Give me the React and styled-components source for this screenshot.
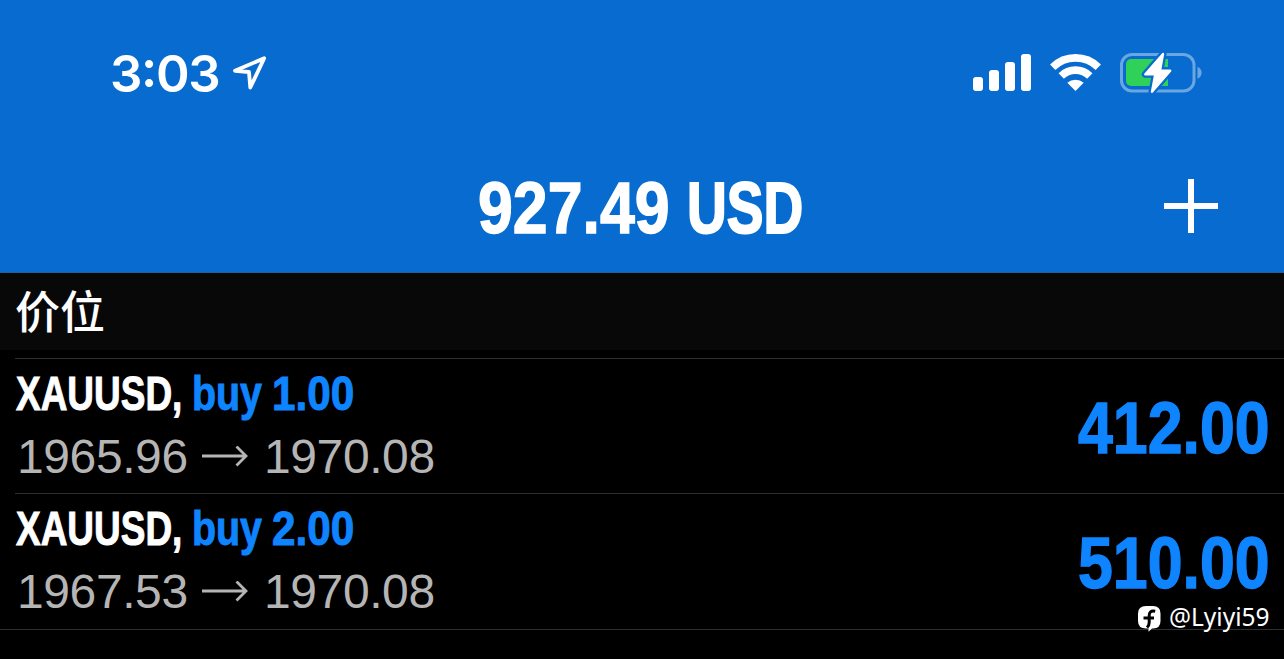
import React from "react";
import styled, { createGlobalStyle } from "styled-components";

const GlobalStyle = createGlobalStyle`
  body {
    margin: 0;
    background: #000;
    font-family: "Liberation Sans", "Noto Sans CJK SC", sans-serif;
  }
`;

const StyledScreen = styled.div`
  position: relative;
  width: 1284px;
  height: 659px;
  overflow: hidden;
  background: #000;
  color: #fff;
`;

const StyledHeader = styled.header`
  height: 273px;
  box-sizing: border-box;
  background: #076bcf;
  border-bottom: 1px solid #235f9c;
`;

const StatusBar = styled.div`
  height: 140px;
  display: flex;
  justify-content: space-between;
  box-sizing: border-box;
  padding: 43px 80px 0 110px;
`;

const StatusGroup = styled.div`
  display: flex;
  height: 60px;
  align-items: center;
  gap: ${(props) => props.$gap || 0}px;
  svg {
    display: block;
  }
`;

const Clock = styled.span`
  width: 121px;
  font-family: Inter, sans-serif;
  font-size: 51px;
  font-weight: 600;
  line-height: 61px;
  letter-spacing: -1.4px;
  span {
    display: inline-block;
    transform: translateY(-5px);
  }
`;

const TitleBar = styled.div`
  display: grid;
  grid-template-columns: 478px 1fr 120px;
  height: 132px;
  align-items: center;
`;

const Balance = styled.h1`
  grid-column: 2;
  display: flex;
  margin: 0;
  height: 132px;
  font-size: 72px;
  line-height: 136px;
`;

const AddButton = styled.button`
  width: 54px;
  height: 54px;
  padding: 0;
  border: none;
  background: none;
  color: #fff;
  svg {
    display: block;
  }
`;

const Condensed = styled.span`
  display: block;
  flex: none;
  width: ${(props) => props.$width}px;
  font-weight: 700;
  white-space: pre;
  -webkit-text-stroke: ${(props) => props.$stroke || 1}px currentColor;
  transform: scaleX(${(props) => props.$scale || 1});
  transform-origin: left;
`;

const SectionTitle = styled.h2`
  height: 77px;
  margin: 0 0 8px;
  padding-left: 15px;
  background: #080808;
  font-family: "Noto Sans CJK SC", sans-serif;
  font-size: 45px;
  font-weight: 500;
  line-height: 73px;
`;

const PositionRow = styled.div`
  display: flex;
  justify-content: space-between;
  box-sizing: border-box;
  height: ${(props) => props.$height}px;
  margin-left: 15px;
  border-top: 1px solid #2e2e2e;
`;

const Symbol = styled.div`
  display: flex;
  height: 68px;
  padding-left: 1px;
  font-size: 48px;
  line-height: 70px;
`;

const Side = styled.div`
  color: #0f84ff;
  display: flex;
`;

const Prices = styled.div`
  display: flex;
  align-items: center;
  height: 60px;
  padding-left: 2px;
  color: #b5b5b5;
  font-size: 48px;
  line-height: 60px;
  letter-spacing: -0.4px;
  svg {
    margin: 0 16px 0 14px;
  }
`;

const Price = styled.span`
  width: 171px;
`;

const Profit = styled.div`
  color: #0f84ff;
  width: 206px;
  font-size: 72px;
  line-height: 139px;
`;

const Footer = styled.div`
  border-top: 1px solid #2e2e2e;
`;

const Watermark = styled.div`
  position: absolute;
  left: 1138px;
  top: 602px;
  display: flex;
  gap: 8px;
  font-family: "Noto Sans", sans-serif;
  font-size: 24.5px;
  line-height: 29px;
  white-space: nowrap;
  svg {
    margin-top: 4px;
  }
`;

const LocationArrow = () => (
  <svg width="36" height="38" viewBox="0 0 36 38" fill="none">
    <path
      d="M33.2 4.2 4 16.8 18 18 19.3 33.5Z"
      stroke="#fff"
      strokeWidth="3.8"
      strokeLinejoin="round"
    />
  </svg>
);

const SignalIcon = () => (
  <svg width="58" height="38" viewBox="0 0 58 38" fill="#fff">
    <rect x="0" y="23" width="10" height="14" rx="3" />
    <rect x="16" y="16" width="10" height="21" rx="3" />
    <rect x="32" y="8" width="10" height="29" rx="3" />
    <rect x="48" y="0" width="10" height="37" rx="3" />
  </svg>
);

const WifiIcon = () => (
  <svg width="52" height="38" viewBox="0 0 52 38" fill="none">
    <path d="M2.7 13.2a32.5 32.5 0 0 1 45.6 0" stroke="#fff" strokeWidth="7.6" />
    <path d="M11.2 22a20.4 20.4 0 0 1 28.6 0" stroke="#fff" strokeWidth="7.6" />
    <path d="M17.3 28.7a12.5 12.5 0 0 1 16.4 0L25.5 37Z" fill="#fff" />
  </svg>
);

const BatteryIcon = () => (
  <svg width="84" height="44" viewBox="0 0 84 44" fill="none">
    <rect x="1.5" y="3.5" width="72.5" height="36.5" rx="10.5" stroke="#6ba6e2" strokeWidth="3" />
    <path d="M77.5 15.7c5.5 2 5.5 10 0 12Z" fill="#6ba6e2" />
    <path d="M11 8h37v27H11a5 5 0 0 1-5-5v-17a5 5 0 0 1 5-5Z" fill="#30d158" />
    <path
      d="M43 3 25.3 23.3h10L32 40.8 50.2 19.6H40Z"
      fill="#fff"
      stroke="#076bcf"
      strokeWidth="7"
      strokeLinejoin="round"
    />
    <path
      d="M43 3 25.3 23.3h10L32 40.8 50.2 19.6H40Z"
      fill="#fff"
      stroke="#fff"
      strokeWidth="2.4"
      strokeLinejoin="round"
    />
  </svg>
);

const PlusIcon = () => (
  <svg width="54" height="54" viewBox="0 0 54 54">
    <path d="M27 0v54M0 27h54" stroke="#fff" strokeWidth="6" />
  </svg>
);

const ArrowIcon = () => (
  <svg width="46" height="22" viewBox="0 0 46 22" fill="none">
    <path d="M0 10h44M34.5.5 44 10l-9.5 9.5" stroke="#b5b5b5" strokeWidth="2.8" />
  </svg>
);

const BrandIcon = () => (
  <svg width="23" height="26" viewBox="0 0 23 26">
    <path
      d="M8 0h7q7.5 0 7.5 7.5v7.5q0 7.5-7.5 7.5h-1l-3.5 3.3v-3.3H8Q0 22.5 0 15V7.5Q0 0 8 0Z"
      fill="#fff"
    />
    <path
      d="M17.2 5.3c-4.5-.8-6 1-6 4.2v7c0 2-.7 3.6-2.2 5M5.5 12h10.5"
      stroke="#000"
      strokeWidth="3"
      fill="none"
    />
  </svg>
);

const positions = [
  { id: 1, symbol: "XAUUSD,", volume: "1.00", open: "1965.96", current: "1970.08", profit: "412.00", height: 135 },
  { id: 2, symbol: "XAUUSD,", volume: "2.00", open: "1967.53", current: "1970.08", profit: "510.00", height: 136 },
];

const App = () => {
  return (
    <StyledScreen>
      <GlobalStyle />
      <StyledHeader>
        <StatusBar>
          <StatusGroup>
            <Clock>
              3<span>:</span>03
            </Clock>
            <LocationArrow />
          </StatusGroup>
          <StatusGroup $gap={18.5}>
            <SignalIcon />
            <WifiIcon />
            <BatteryIcon />
          </StatusGroup>
        </StatusBar>
        <TitleBar>
          <Balance>
            <Condensed $width={209} $scale={0.87} $stroke={1.4}>927.49</Condensed>
            <Condensed $width={120} $scale={0.765} $stroke={2}>USD</Condensed>
          </Balance>
          <AddButton aria-label="Add">
            <PlusIcon />
          </AddButton>
        </TitleBar>
      </StyledHeader>
      <SectionTitle>价位</SectionTitle>
      {positions.map((p) => (
        <PositionRow key={p.id} $height={p.height}>
          <div>
            <Symbol>
              <Condensed $width={176} $scale={0.77}>{p.symbol}</Condensed>
              <Side>
                <Condensed $width={80} $scale={0.82}>buy</Condensed>
                <Condensed $width={84} $scale={0.88}>{p.volume}</Condensed>
              </Side>
            </Symbol>
            <Prices>
              <Price>{p.open}</Price>
              <ArrowIcon />
              <Price>{p.current}</Price>
            </Prices>
          </div>
          <Profit>
            <Condensed $width={193} $scale={0.87} $stroke={1.4}>{p.profit}</Condensed>
          </Profit>
        </PositionRow>
      ))}
      <Footer />
      <Watermark>
        <BrandIcon />
        <span>@Lyiyi59</span>
      </Watermark>
    </StyledScreen>
  );
};

export default App;
